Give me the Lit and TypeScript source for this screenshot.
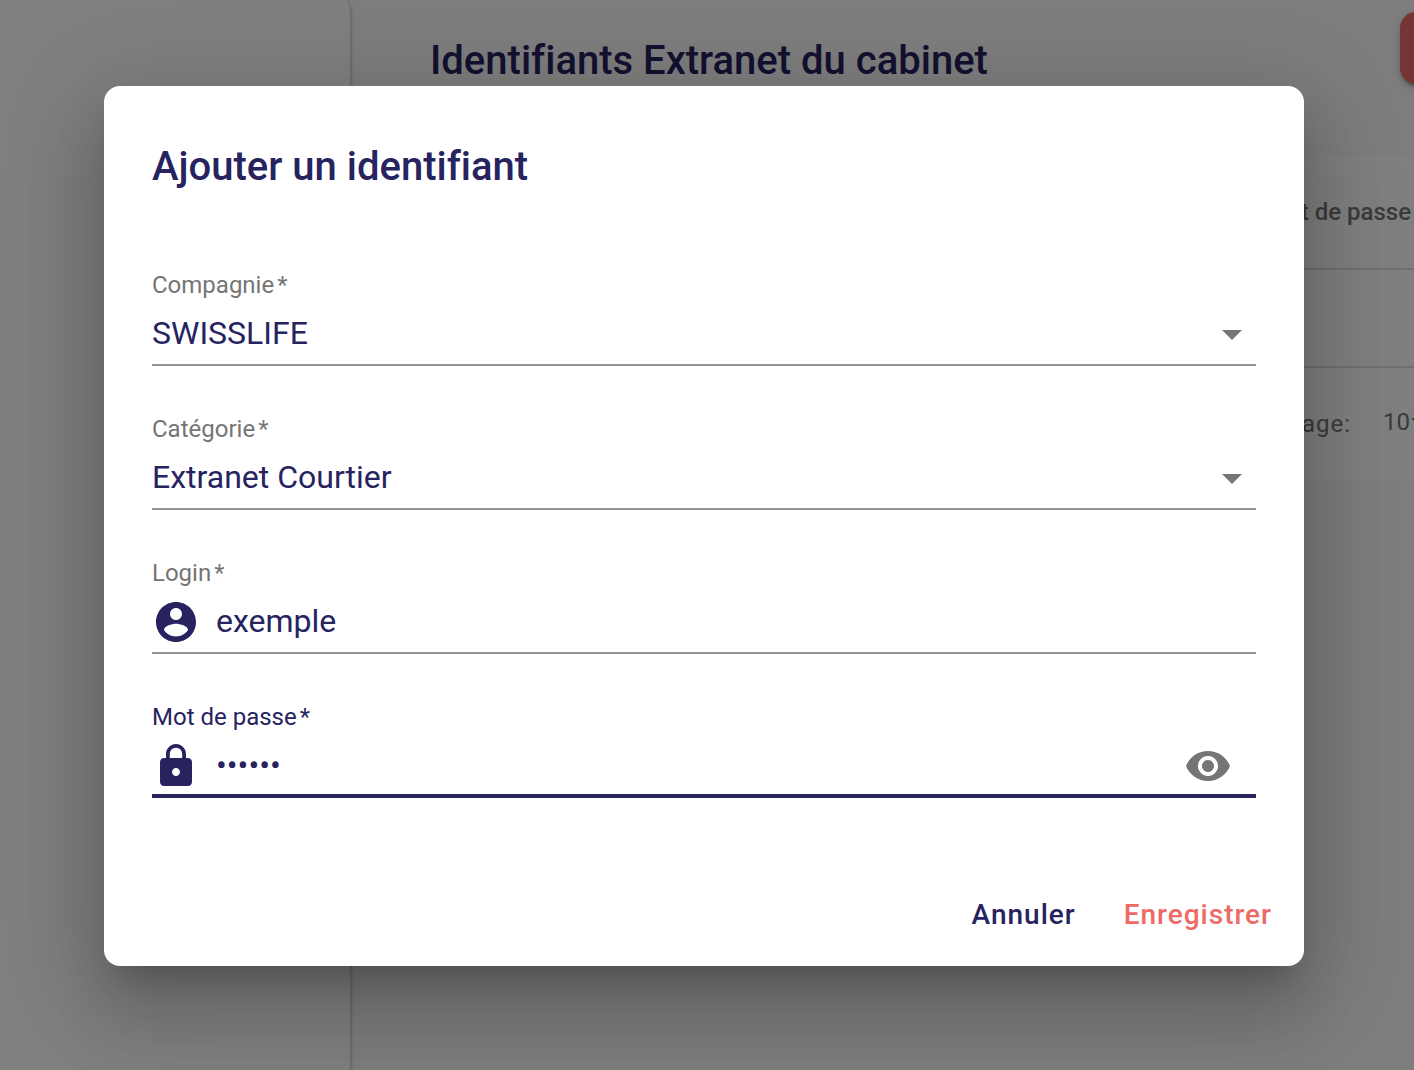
import { LitElement, html, css, svg } from "lit";
import { customElement, property, state } from "lit/decorators.js";
import { classMap } from "lit/directives/class-map.js";

const ICONS = {
  account: svg`<path d="M12 2C6.48 2 2 6.48 2 12s4.48 10 10 10 10-4.48 10-10S17.52 2 12 2zm0 3c1.66 0 3 1.34 3 3s-1.34 3-3 3-3-1.34-3-3 1.34-3 3-3zm0 14.2c-2.5 0-4.71-1.28-6-3.22.03-1.99 4-3.08 6-3.08 1.99 0 5.97 1.09 6 3.08-1.29 1.94-3.5 3.22-6 3.22z"/>`,
  lock: svg`<path d="M18 8h-1V6c0-2.76-2.24-5-5-5S7 3.24 7 6v2H6c-1.1 0-2 .9-2 2v10c0 1.1.9 2 2 2h12c1.1 0 2-.9 2-2V10c0-1.1-.9-2-2-2zm-6 9c-1.1 0-2-.9-2-2s.9-2 2-2 2 .9 2 2-.9 2-2 2zm3.1-9H8.9V6c0-1.71 1.39-3.1 3.1-3.1 1.71 0 3.1 1.39 3.1 3.1v2z"/>`,
  eye: svg`<path d="M12 4.5C7 4.5 2.73 7.61 1 12c1.73 4.39 6 7.5 11 7.5s9.27-3.11 11-7.5c-1.73-4.39-6-7.5-11-7.5zM12 17c-2.76 0-5-2.24-5-5s2.24-5 5-5 5 2.24 5 5-2.24 5-5 5zm0-8c-1.66 0-3 1.34-3 3s1.34 3 3 3 3-1.34 3-3-1.34-3-3-3z"/>`,
  arrow: svg`<path d="M7 10l5 5 5-5z"/>`,
};

type FieldKind = "select" | "text" | "password";

@customElement("form-field")
class FormField extends LitElement {
  @property() label = "";
  @property() value = "";
  @property() kind: FieldKind = "text";
  @property() icon: "" | "account" | "lock" = "";
  @property({ type: Boolean }) active = false;
  @state() private revealed = false;

  static styles = css`
    :host {
      display: block;
      color: #26235f;
    }
    .label {
      display: flex;
      gap: 3px;
      margin-bottom: 10px;
      font-size: 24px;
      line-height: 30px;
      color: #757575;
    }
    .active .label {
      color: #26235f;
    }
    .row {
      display: flex;
      align-items: center;
      height: 48px;
      padding-bottom: 6px;
      border-bottom: 2px solid #949494;
    }
    .active .row {
      padding-bottom: 4px;
      border-bottom: 4px solid #26235f;
    }
    .icon {
      flex: none;
      width: 48px;
      height: 48px;
      margin-right: 16px;
      fill: currentColor;
    }
    .control {
      flex: 1;
      box-sizing: border-box;
      min-width: 0;
      height: 48px;
      margin: 0;
      padding: 0 0 2px;
      border: 0;
      outline: 0;
      background: none;
      appearance: none;
      font: inherit;
      font-size: 32px;
      color: inherit;
    }
    .arrow {
      flex: none;
      width: 48px;
      height: 48px;
      fill: #757575;
      pointer-events: none;
    }
    .toggle {
      flex: none;
      width: 48px;
      height: 48px;
      margin-right: 24px;
      padding: 0;
      border: 0;
      background: none;
      cursor: pointer;
    }
    .eye {
      display: block;
      width: 48px;
      height: 48px;
      fill: #757575;
    }
  `;

  private control() {
    if (this.kind === "select") {
      return html`
        <select id="control" class="control" required>
          <option selected>${this.value}</option>
        </select>
        <svg class="arrow" viewBox="0 0 24 24" aria-hidden="true">${ICONS.arrow}</svg>
      `;
    }
    const type = this.kind === "password" && !this.revealed ? "password" : "text";
    return html`
      <input id="control" class="control" type=${type} .value=${this.value} required />
      ${this.kind === "password"
        ? html`<button
            class="toggle"
            type="button"
            aria-label="Afficher le mot de passe"
            @click=${() => (this.revealed = !this.revealed)}
          >
            <svg class="eye" viewBox="0 0 24 24" aria-hidden="true">${ICONS.eye}</svg>
          </button>`
        : ""}
    `;
  }

  render() {
    return html`
      <div class=${classMap({ field: true, active: this.active })}>
        <label class="label" for="control"><span>${this.label}</span><span>*</span></label>
        <div class="row">
          ${this.icon
            ? html`<svg class="icon" viewBox="0 0 24 24" aria-hidden="true">${ICONS[this.icon]}</svg>`
            : ""}
          ${this.control()}
        </div>
      </div>
    `;
  }
}

@customElement("extranet-page")
class ExtranetPage extends LitElement {
  static styles = css`
    :host {
      display: grid;
      grid-template-columns: 350px minmax(0, 1fr);
      min-height: 100vh;
      background: #fafafa;
    }
    .sidebar {
      background: #fff;
      border-top-right-radius: 6px 12px;
      box-shadow: 0 2px 4px rgba(0, 0, 0, 0.4);
    }
    .main {
      overflow: hidden;
    }
    .header {
      display: flex;
      justify-content: space-between;
      align-items: flex-start;
      padding: 12px 0 46px 80px;
    }
    .title {
      margin: 0;
      font-size: 40px;
      font-weight: 500;
      font-variant-ligatures: none;
      line-height: 98px;
      color: #26235f;
      white-space: nowrap;
    }
    .add {
      flex: none;
      width: 144px;
      height: 72px;
      margin-right: -130px;
      border: 0;
      border-radius: 16px;
      background: #e96a6a;
      box-shadow: 0 6px 2px -4px rgba(0, 0, 0, 0.2), 0 4px 4px rgba(0, 0, 0, 0.14),
        0 2px 10px rgba(0, 0, 0, 0.12);
    }
    .card {
      margin-left: 80px;
      background: #fff;
      color: #757575;
      font-size: 24px;
    }
    .table {
      width: 100%;
      border-collapse: separate;
      border-spacing: 0;
      text-align: right;
    }
    .head,
    .cell {
      padding: 0 3px 0 0;
      border-bottom: 2px solid #dedede;
    }
    .head {
      height: 112px;
      font-weight: 500;
    }
    .cell {
      height: 96px;
    }
    .paginator {
      display: flex;
      justify-content: flex-end;
      align-items: center;
      height: 112px;
    }
    .size-label {
      letter-spacing: 1px;
      margin-right: 32px;
    }
    .size {
      width: 28px;
      height: 40px;
      margin: 0 0 4px;
      padding: 0;
      border: 0;
      background: none;
      appearance: none;
      font: inherit;
      color: inherit;
    }
    .size-arrow {
      flex: none;
      width: 20px;
      height: 10px;
      margin: 0 -17px 2px 0;
      fill: #757575;
    }
  `;

  render() {
    return html`
      <aside class="sidebar"></aside>
      <main class="main">
        <header class="header">
          <h1 class="title">Identifiants Extranet du cabinet</h1>
          <button class="add" type="button" aria-label="Ajouter"></button>
        </header>
        <section class="card">
          <table class="table">
            <thead>
              <tr><th class="head" scope="col">Mot de passe</th></tr>
            </thead>
            <tbody>
              <tr><td class="cell"></td></tr>
            </tbody>
          </table>
          <div class="paginator">
            <label class="size-label" for="size">par page:</label>
            <select class="size" id="size">
              <option>10</option>
            </select>
            <svg class="size-arrow" viewBox="7 10 10 5" aria-hidden="true">${ICONS.arrow}</svg>
          </div>
        </section>
      </main>
    `;
  }
}

@customElement("credential-dialog")
class CredentialDialog extends LitElement {
  static styles = css`
    :host {
      display: block;
      border-radius: 16px;
      background: #fff;
      box-shadow: 0 22px 30px -14px rgba(0, 0, 0, 0.2), 0 48px 76px 6px rgba(0, 0, 0, 0.14),
        0 18px 92px 16px rgba(0, 0, 0, 0.12);
    }
    .title {
      margin: 0;
      padding: 48px 48px 70px;
      font-size: 40px;
      font-weight: 500;
      font-variant-ligatures: none;
      line-height: 66px;
      color: #26235f;
    }
    .fields {
      display: grid;
      gap: 48px;
      padding: 0 48px 80px;
    }
    .actions {
      display: flex;
      justify-content: flex-end;
      gap: 16px;
      padding: 0 16px 16px;
    }
    .action {
      height: 72px;
      padding: 0 16px;
      border: 0;
      background: none;
      font: inherit;
      font-size: 28px;
      font-weight: 500;
      letter-spacing: 1px;
      color: #26235f;
      cursor: pointer;
    }
    .primary {
      color: #ec6a68;
    }
  `;

  render() {
    return html`
      <form role="dialog" aria-modal="true" aria-labelledby="title">
        <h2 class="title" id="title">Ajouter un identifiant</h2>
        <div class="fields">
          <form-field label="Compagnie" kind="select" value="SWISSLIFE"></form-field>
          <form-field label="Catégorie" kind="select" value="Extranet Courtier"></form-field>
          <form-field label="Login" icon="account" value="exemple"></form-field>
          <form-field label="Mot de passe" kind="password" icon="lock" value="secret" active></form-field>
        </div>
        <div class="actions">
          <button class="action" type="button">Annuler</button>
          <button class="action primary" type="button">Enregistrer</button>
        </div>
      </form>
    `;
  }
}

@customElement("app-root")
class AppRoot extends LitElement {
  static styles = css`
    :host {
      display: block;
      position: relative;
      overflow: hidden;
      min-height: 100vh;
      font-family: Roboto, "Liberation Sans", sans-serif;
    }
    .backdrop {
      position: absolute;
      inset: 0;
      display: grid;
      align-items: start;
      padding: 86px 110px 0 104px;
      background: rgba(0, 0, 0, 0.5);
    }
  `;

  render() {
    return html`
      <extranet-page></extranet-page>
      <div class="backdrop">
        <credential-dialog></credential-dialog>
      </div>
    `;
  }
}
